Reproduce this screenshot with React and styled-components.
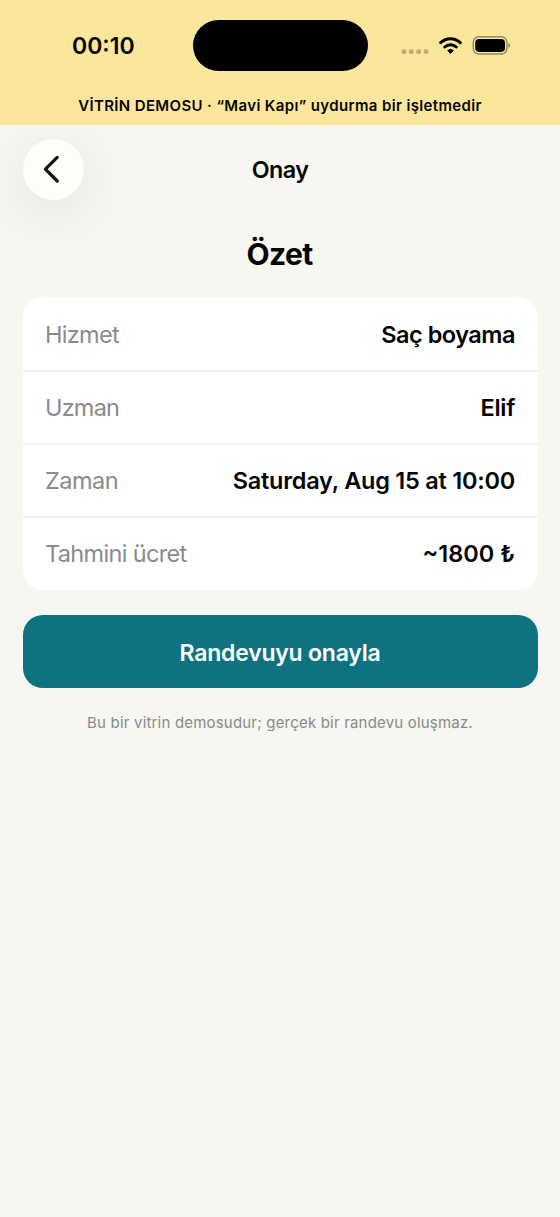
import React from 'react';
import styled, { createGlobalStyle } from 'styled-components';

const Global = createGlobalStyle`
  * { box-sizing: border-box; }
  body { margin: 0; background: #f6f7f0; font-family: Inter, "Liberation Sans", sans-serif; color: #050505; }
`;
const Screen = styled.main`
  width: 560px;
  height: 1217px;
  background: #f6f7f0;
  overflow: hidden;
`;
const Top = styled.header`
  height: 124.5px;
  background: #fae79c;
  display: flex;
  flex-direction: column;
`;
const StatusBar = styled.div`
  height: 90px;
  display: grid;
  grid-template-columns: 192.5px 175px 192.5px;
  align-items: center;
`;
const Clock = styled.time`
  padding: 1px 0 0 72px;
  font-size: 23px;
  font-weight: 600;
  white-space: nowrap;
`;
const Island = styled.div`
  height: 51px;
  border-radius: 26px;
  background: #000;
`;
const Signals = styled.div`
  display: flex;
  align-items: center;
  padding-left: 33.5px;
`;
const Banner = styled.div`
  height: 30px;
  display: flex;
  align-items: center;
  justify-content: center;
  font-size: 15px;
  font-weight: 600;
`;
const Label = styled.span`
  letter-spacing: ${p => p.$ls || 0}px;
  white-space: nowrap;
`;
const Nav = styled.nav`
  height: 89.5px;
  padding: 0 22.5px;
  display: grid;
  grid-template-columns: 61.5px 1fr 61.5px;
  align-items: center;
  text-align: center;
  font-size: 23.3px;
  font-weight: 600;
`;
const Back = styled.button`
  width: 61.5px;
  height: 61.5px;
  border: 0;
  padding: 0 1.5px 0 0;
  border-radius: 50%;
  background: #fdfefa;
  box-shadow: 0 12px 56px rgba(0, 0, 0, .09);
  display: grid;
  place-items: center;
`;
const Title = styled.h1`
  margin: 22px 0 24px;
  height: 37px;
  line-height: 37px;
  padding-right: 1px;
  text-align: center;
  font-size: 30px;
  font-weight: 700;
`;
const Card = styled.section`
  margin: 0 22.5px;
  padding-bottom: 0.8px;
  background: #fff;
  border-radius: 20px;
  overflow: hidden;
`;
const Row = styled.div`
  height: 73.1px;
  padding: 2px 22.5px 0;
  display: flex;
  justify-content: space-between;
  align-items: center;
  font-size: 23.5px;
  box-shadow: inset 0 ${p => (p.$first ? 0 : 1.5)}px #eeeeef;
`;
const Key = styled(Label)` color: #8a8a8d; `;
const Value = styled(Label)` font-weight: 600; `;
const Confirm = styled.button`
  display: block;
  width: 515px;
  height: 73px;
  margin: 25px 22.5px 0;
  padding: 2px 0 0;
  border: 0;
  border-radius: 20px;
  background: #0e7280;
  color: #fff;
  font: 600 23px Inter, sans-serif;
`;
const Note = styled.p`
  margin: 25px 0 0;
  text-align: center;
  font-size: 15px;
  line-height: 20px;
  color: #8a8a8a;
`;

const rows = [
  { name: 'Hizmet', value: 'Saç boyama', nameLs: -0.7, valueLs: -0.5 },
  { name: 'Uzman', value: 'Elif', nameLs: -0.8, valueLs: -0.3 },
  { name: 'Zaman', value: 'Saturday, Aug 15 at 10:00', nameLs: -0.5, valueLs: -0.24 },
  { name: 'Tahmini ücret', value: '~1800 ₺', nameLs: -0.66, valueLs: 0 },
];

function StatusIcons() {
  return (
    <svg width="112" height="30" viewBox="401 30 112 30">
      <g fillOpacity=".25">
        <rect x="401.6" y="49.3" width="4.7" height="4.7" rx="1.7" />
        <rect x="408.9" y="49.3" width="4.7" height="4.7" rx="1.7" />
        <rect x="416.3" y="49.3" width="4.7" height="4.7" rx="1.7" />
        <rect x="423.7" y="49.3" width="4.7" height="4.7" rx="1.7" />
      </g>
      <g fill="none" stroke="#000" strokeWidth="3" strokeLinecap="round">
        <path d="M440.7 42.6a14.2 14.2 0 0 1 19.6 0" />
        <path d="M444.7 47a8.5 8.5 0 0 1 11.6 0" />
      </g>
      <path d="M450.5 53.4l-2.8-2.8a4.2 4.2 0 0 1 5.6 0z" stroke="#000" strokeWidth="1" strokeLinejoin="round" />
      <rect x="473.3" y="36.8" width="33.6" height="17.2" rx="5.4" fill="none" stroke="#000" strokeOpacity=".42" strokeWidth="1.4" />
      <rect x="475.2" y="38.9" width="29.8" height="13" rx="3.8" />
      <path d="M508.4 43c2.1 1 2.1 4 0 5z" fillOpacity=".45" />
    </svg>
  );
}

export default function App() {
  return (
    <>
      <Global />
      <Screen>
        <Top>
          <StatusBar>
            <Clock>00:10</Clock>
            <Island />
            <Signals><StatusIcons /></Signals>
          </StatusBar>
          <Banner><Label $ls={0.36}>VİTRİN DEMOSU · “Mavi Kapı” uydurma bir işletmedir</Label></Banner>
        </Top>
        <Nav>
          <Back aria-label="Geri">
            <svg width="24" height="30" viewBox="0 0 24 30" fill="none" stroke="#151613" strokeWidth="3.3" strokeLinecap="round" strokeLinejoin="round">
              <path d="M16.2 3.4 4.4 15.2 16.2 27" />
            </svg>
          </Back>
          <Label $ls={-0.55}>Onay</Label>
        </Nav>
        <Title><Label $ls={-0.6}>Özet</Label></Title>
        <Card>
          {rows.map((r, i) => (
            <Row key={r.name} $first={i === 0}>
              <Key $ls={r.nameLs}>{r.name}</Key>
              <Value $ls={r.valueLs}>{r.value}</Value>
            </Row>
          ))}
        </Card>
        <Confirm><Label $ls={-0.22}>Randevuyu onayla</Label></Confirm>
        <Note><Label $ls={0.19}>Bu bir vitrin demosudur; gerçek bir randevu oluşmaz.</Label></Note>
      </Screen>
    </>
  );
}
